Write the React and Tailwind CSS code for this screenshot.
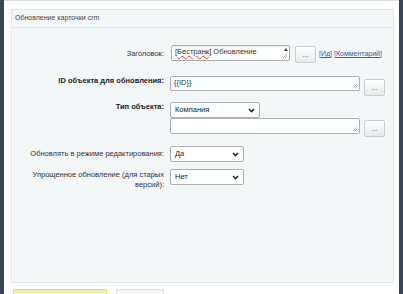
import React from 'react';

const Dots = () => (
  <div className="w-[21px] h-[17px] shrink-0 rounded-[2px] border border-[#c9cfd4] bg-gradient-to-b from-[#ffffff] to-[#e6eaec] flex items-center justify-center text-[7px] leading-none text-[#555] pb-[1px]">
    ...
  </div>
);

const Grip = () => (
  <svg className="absolute right-[1px] bottom-[1px]" width="6" height="6" viewBox="0 0 6 6">
    <path d="M5 1 L1 5 M5 3 L3 5" stroke="#999" strokeWidth="0.8" />
  </svg>
);

const Select = ({ value, className }) => (
  <div className={`relative h-[16px] rounded-[2px] border border-[#a9b0b6] bg-white flex items-center pl-[4px] text-[7.5px] text-[#222] ${className}`}>
    {value}
    <svg className="absolute right-[4px] top-[5px]" width="7" height="5" viewBox="0 0 7 5">
      <path d="M1 1 L3.5 3.5 L6 1" stroke="#222" strokeWidth="1.6" fill="none" />
    </svg>
  </div>
);

const Label = ({ children, bold }) => (
  <div className={`w-[158px] shrink-0 text-right pr-[6px] text-[7.5px] leading-[10px] ${bold ? 'font-bold text-[#222]' : 'text-[#333]'}`}>
    {children}
  </div>
);

const App = () => {
  return (
    <div className="w-[403px] h-[294px] bg-[#3b4650] flex overflow-hidden" style={{ fontFamily: '"Liberation Sans", Arial, sans-serif' }}>
      <div className="ml-[4px] w-[395px] h-full bg-white flex flex-col">
        <div className="h-[3px] bg-[#eceff1] border-b border-[#d9dee1]" />
        <div className="mt-[8px] ml-[7px] w-[383px] h-[274px] shrink-0 bg-[#f4f7f8] border border-[#e1e6e8] flex flex-col">
          <div className="h-[18px] border-b border-[#e1e6e8] flex items-center pl-[3px] text-[7px] text-[#444]">
            Обновление карточки crm
          </div>

          {/* Заголовок */}
          <div className="flex items-start mt-[17px]">
            <Label><div className="pt-[4px]">Заголовок:</div></Label>
            <div className="relative w-[119px] h-[16px] ml-[1px] border border-[#a9b0b6] rounded-[2px] bg-white text-[7.5px] leading-[12px] pl-[3px] text-[#333] shadow-[inset_0_1px_1px_rgba(0,0,0,0.08)]">
              [<span className="underline decoration-wavy decoration-[#e0443a] decoration-[0.5px]">Бестранк</span>] Обновление
              <div className="absolute right-[1px] top-[1px] w-[5px] h-[5px] flex items-center justify-center">
                <svg width="4" height="3" viewBox="0 0 4 3"><path d="M0 3 L2 0 L4 3Z" fill="#444" /></svg>
              </div>
              <Grip />
            </div>
            <div className="ml-[5px] mt-[1px]"><Dots /></div>
            <div className="ml-[3px] pt-[4px] text-[7px] leading-[10px] text-[#2a66b3]">
              [<span className="underline">Ид</span>] [<span className="underline">Комментарий</span>]
            </div>
          </div>

          {/* ID */}
          <div className="flex items-start mt-[13px]">
            <Label bold><div>ID объекта для обновления:</div></Label>
            <div className="relative w-[190px] h-[15px] border border-[#a9b0b6] rounded-[2px] bg-white text-[7.5px] leading-[12px] pl-[3px] text-[#333]">
              {'{{ID}}'}
              <Grip />
            </div>
            <div className="ml-[4px] mt-[3px]"><Dots /></div>
          </div>

          {/* Тип объекта */}
          <div className="flex items-start mt-[6px]">
            <Label bold><div className="pt-[0px]">Тип объекта:</div></Label>
            <div className="flex flex-col">
              <Select value="Компания" className="w-[90px]" />
              <div className="flex items-start">
                <div className="relative w-[190px] h-[16px] border border-[#a9b0b6] rounded-[2px] bg-white">
                  <Grip />
                </div>
                <div className="ml-[4px] mt-[2px]"><Dots /></div>
              </div>
            </div>
          </div>

          {/* Обновлять */}
          <div className="flex items-center mt-[9px]">
            <Label>Обновлять в режиме редактирования:</Label>
            <Select value="Да" className="w-[74px]" />
          </div>

          {/* Упрощенное */}
          <div className="flex items-start mt-[7px]">
            <Label>
              <div className="pt-[1px]">Упрощенное обновление (для старых<br />версий):</div>
            </Label>
            <Select value="Нет" className="w-[74px]" />
          </div>
        </div>

        <div className="flex mt-[6px] ml-[9px] gap-[9px]">
          <div className="w-[94px] h-[20px] rounded-[2px] border border-[#d8dc84] bg-[#eef2a8]" />
          <div className="w-[48px] h-[20px] rounded-[2px] border border-[#d9dde0] bg-[#f4f5f6]" />
        </div>
      </div>
    </div>
  );
};

export default App;
